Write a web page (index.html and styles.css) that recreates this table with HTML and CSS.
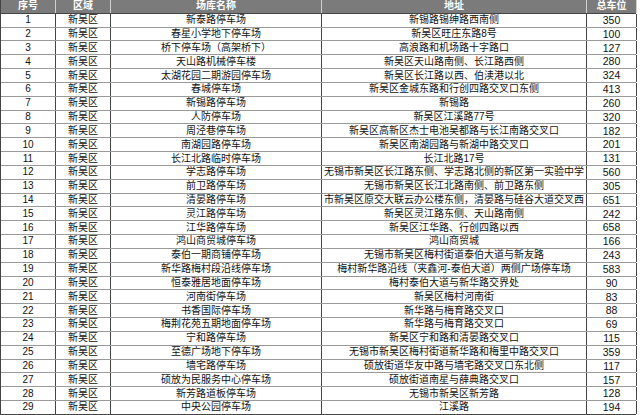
FILE: index.html
```html
<!DOCTYPE html>
<html lang="zh">
<head>
<meta charset="utf-8">
<title>停车场</title>
<link rel="stylesheet" href="styles.css">
</head>
<body>
<div class="sheet">
  <div class="row head"><div class="c">序号</div><div class="c">区域</div><div class="c">场库名称</div><div class="c">地址</div><div class="c">总车位</div></div>
  <div class="row"><div class="c">1</div><div class="c">新吴区</div><div class="c">新泰路停车场</div><div class="c">新锡路锡绅路西南侧</div><div class="c">350</div></div>
  <div class="row"><div class="c">2</div><div class="c">新吴区</div><div class="c">春星小学地下停车场</div><div class="c">新吴区旺庄东路8号</div><div class="c">100</div></div>
  <div class="row"><div class="c">3</div><div class="c">新吴区</div><div class="c">桥下停车场（高架桥下）</div><div class="c">高浪路和机场路十字路口</div><div class="c">127</div></div>
  <div class="row"><div class="c">4</div><div class="c">新吴区</div><div class="c">天山路机械停车楼</div><div class="c">新吴区天山路南侧、长江路西侧</div><div class="c">280</div></div>
  <div class="row"><div class="c">5</div><div class="c">新吴区</div><div class="c">太湖花园二期游园停车场</div><div class="c">新吴区长江路以西、伯渎港以北</div><div class="c">324</div></div>
  <div class="row"><div class="c">6</div><div class="c">新吴区</div><div class="c">春城停车场</div><div class="c">新吴区金城东路和行创四路交叉口东侧</div><div class="c">413</div></div>
  <div class="row"><div class="c">7</div><div class="c">新吴区</div><div class="c">新锡路停车场</div><div class="c">新锡路</div><div class="c">260</div></div>
  <div class="row"><div class="c">8</div><div class="c">新吴区</div><div class="c">人防停车场</div><div class="c">新吴区江溪路77号</div><div class="c">320</div></div>
  <div class="row"><div class="c">9</div><div class="c">新吴区</div><div class="c">周泾巷停车场</div><div class="c">新吴区高新区杰士电池吴都路与长江南路交叉口</div><div class="c">182</div></div>
  <div class="row"><div class="c">10</div><div class="c">新吴区</div><div class="c">南湖园路停车场</div><div class="c">新吴区南湖园路与新湖中路交叉口</div><div class="c">201</div></div>
  <div class="row"><div class="c">11</div><div class="c">新吴区</div><div class="c">长江北路临时停车场</div><div class="c">长江北路17号</div><div class="c">131</div></div>
  <div class="row"><div class="c">12</div><div class="c">新吴区</div><div class="c">学志路停车场</div><div class="c">无锡市新吴区长江路东侧、学志路北侧的新区第一实验中学</div><div class="c">560</div></div>
  <div class="row"><div class="c">13</div><div class="c">新吴区</div><div class="c">前卫路停车场</div><div class="c">无锡市新吴区长江北路南侧、前卫路东侧</div><div class="c">305</div></div>
  <div class="row"><div class="c">14</div><div class="c">新吴区</div><div class="c">清晏路停车场</div><div class="c">市新吴区原交大联云办公楼东侧，清晏路与硅谷大道交叉西</div><div class="c">651</div></div>
  <div class="row"><div class="c">15</div><div class="c">新吴区</div><div class="c">灵江路停车场</div><div class="c">新吴区灵江路东侧、天山路南侧</div><div class="c">242</div></div>
  <div class="row"><div class="c">16</div><div class="c">新吴区</div><div class="c">江华路停车场</div><div class="c">新吴区江华路、行创四路以西</div><div class="c">658</div></div>
  <div class="row"><div class="c">17</div><div class="c">新吴区</div><div class="c">鸿山商贸城停车场</div><div class="c">鸿山商贸城</div><div class="c">166</div></div>
  <div class="row"><div class="c">18</div><div class="c">新吴区</div><div class="c">泰伯一期商铺停车场</div><div class="c">无锡市新吴区梅村街道泰伯大道与新友路</div><div class="c">243</div></div>
  <div class="row"><div class="c">19</div><div class="c">新吴区</div><div class="c">新华路梅村段沿线停车场</div><div class="c">梅村新华路沿线（夹鑫河-泰伯大道）两侧广场停车场</div><div class="c">583</div></div>
  <div class="row"><div class="c">20</div><div class="c">新吴区</div><div class="c">恒泰雅居地面停车场</div><div class="c">梅村泰伯大道与新华路交界处</div><div class="c">90</div></div>
  <div class="row"><div class="c">21</div><div class="c">新吴区</div><div class="c">河南街停车场</div><div class="c">新吴区梅村河南街</div><div class="c">83</div></div>
  <div class="row"><div class="c">22</div><div class="c">新吴区</div><div class="c">书香国际停车场</div><div class="c">新华路与梅育路交叉口</div><div class="c">88</div></div>
  <div class="row"><div class="c">23</div><div class="c">新吴区</div><div class="c">梅荆花苑五期地面停车场</div><div class="c">新华路与梅育路交叉口</div><div class="c">69</div></div>
  <div class="row"><div class="c">24</div><div class="c">新吴区</div><div class="c">宁和路停车场</div><div class="c">新吴区宁和路和清晏路交叉口</div><div class="c">115</div></div>
  <div class="row"><div class="c">25</div><div class="c">新吴区</div><div class="c">至德广场地下停车场</div><div class="c">无锡市新吴区梅村街道新华路和梅里中路交叉口</div><div class="c">359</div></div>
  <div class="row"><div class="c">26</div><div class="c">新吴区</div><div class="c">墙宅路停车场</div><div class="c">硕放街道华友中路与墙宅路交叉口东北侧</div><div class="c">117</div></div>
  <div class="row"><div class="c">27</div><div class="c">新吴区</div><div class="c">硕放为民服务中心停车场</div><div class="c">硕放街道南星与薛典路交叉口</div><div class="c">157</div></div>
  <div class="row"><div class="c">28</div><div class="c">新吴区</div><div class="c">新芳路道板停车场</div><div class="c">无锡市新吴区新芳路</div><div class="c">128</div></div>
  <div class="row"><div class="c">29</div><div class="c">新吴区</div><div class="c">中央公园停车场</div><div class="c">江溪路</div><div class="c">194</div></div>
</div>
</body>
</html>
```
FILE: styles.css
```css
* { box-sizing: border-box; }
html, body { margin: 0; padding: 0; background: #ffffff; }
body {
  font-family: "Liberation Sans", "Noto Sans CJK SC", sans-serif;
  font-size: 10px;
  color: #111111;
}
.sheet {
  width: 636px;
  border-left: 1px solid #444444;
}
.row {
  display: grid;
  grid-template-columns: 55px 55px 211px 265px 50px;
  height: 13.83px;
  border-bottom: 1px solid #9a9a9a;
}
.row:last-child { border-bottom-color: #444444; }
.c {
  display: flex;
  align-items: center;
  justify-content: center;
  border-right: 1px solid #444444;
  white-space: nowrap;
  overflow: hidden;
  line-height: 1;
}
.head {
  background: #7b7b7b;
  color: #ffffff;
  font-weight: bold;
  border-bottom-color: #444444;
}
.head .c { border-right-color: #d0d0d0; }
.row .c:last-child { font-size: 10.5px; }
.head .c:last-child { font-size: 10px; }
```
